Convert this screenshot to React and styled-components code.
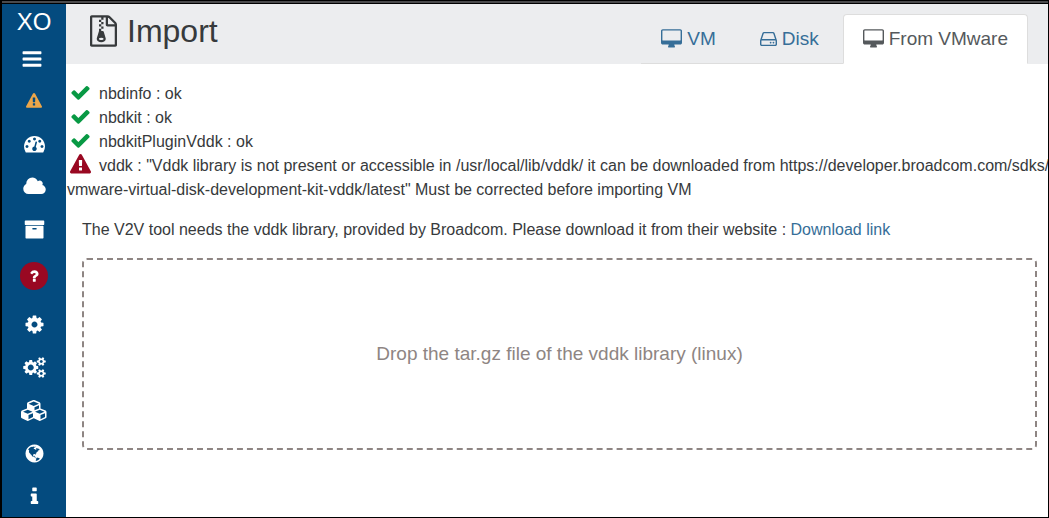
import React from 'react';
import styled, { createGlobalStyle } from 'styled-components';

const color = {
  brand: '#044b7f',
  link: '#366e98',
  text: '#373a3c',
  tabText: '#55595c',
  header: '#ecedef',
  line: '#dddddd',
  success: '#089944',
  danger: '#990822',
  warning: '#eca649',
  muted: '#8e8583',
};

const GlobalStyle = createGlobalStyle`
  *, *::before, *::after { box-sizing: border-box; }
  body {
    margin: 0;
    background: #000;
    color: ${color.text};
    font-family: "Liberation Sans", Arial, sans-serif;
    font-size: 16px;
    line-height: 24px;
  }
`;

const COGS_SMALL =
  'v140q0 16-149 31-12 27-30 52 51 113 51 138 0 4-4 7-122 71-124 71-8 0-46-47t-52-68q-20 2-30 2t-30-2q-14 21-52 68t-46 47q-2 0-124-71-4-3-4-7 0-25 51-138-18-25-30-52-149-15-149-31v-140q0-16 149-31 13-29 30-52-51-113-51-138 0-4 4-7 4-2 35-20t59-34 30-16q8 0 46 46.5t52 67.5q20-2 30-2t30 2q51-71 92-112l6-2q4 0 124 70 4 3 4 7 0 25-51 138 17 23 30 52 149 15 149 31z';

/* Each glyph: [left edge, width, path] on a grid 1792 units high. */
const glyphs = {
  check: [0, 1792, 'M1671 566q0 40-28 68l-724 724-136 136q-28 28-68 28t-68-28l-136-136-362-362q-28-28-28-68t28-68l136-136q28-28 68-28t68 28l294 295 656-657q28-28 68-28t68 28l136 136q28 28 28 68z'],
  bars: [0, 1792, 'M1664 1344v128q0 26-19 45t-45 19h-1408q-26 0-45-19t-19-45v-128q0-26 19-45t45-19h1408q26 0 45 19t19 45zm0-512v128q0 26-19 45t-45 19h-1408q-26 0-45-19t-19-45v-128q0-26 19-45t45-19h1408q26 0 45 19t19 45zm0-512v128q0 26-19 45t-45 19h-1408q-26 0-45-19t-19-45v-128q0-26 19-45t45-19h1408q26 0 45 19t19 45z'],
  warning: [0, 1792, 'M1024 1375v-190q0-14-9.5-23.5t-22.5-9.5h-192q-13 0-22.5 9.5t-9.5 23.5v190q0 14 9.5 23.5t22.5 9.5h192q13 0 22.5-9.5t9.5-23.5zm-2-374l18-459q0-12-10-19-13-11-24-11h-220q-11 0-24 11-10 7-10 21l17 457q0 10 10 16.5t24 6.5h185q14 0 23.5-6.5t10.5-16.5zm-14-934l768 1408q35 63-2 126-17 29-46.5 46t-63.5 17h-1536q-34 0-63.5-17t-46.5-46q-37-63-2-126l768-1408q17-31 47-49t65-18 65 18 47 49z'],
  dashboard: [0, 1792, 'M384 1152q0-53-37.5-90.5t-90.5-37.5-90.5 37.5-37.5 90.5 37.5 90.5 90.5 37.5 90.5-37.5 37.5-90.5zm192-448q0-53-37.5-90.5t-90.5-37.5-90.5 37.5-37.5 90.5 37.5 90.5 90.5 37.5 90.5-37.5 37.5-90.5zm428 481l101-382q6-26-7.5-48.5t-38.5-29.5-48 6.5-30 39.5l-101 382q-60 5-107 43.5t-63 98.5q-20 77 20 146t117 89 146-20 89-117q16-60-6-117t-72-91zm660-33q0-53-37.5-90.5t-90.5-37.5-90.5 37.5-37.5 90.5 37.5 90.5 90.5 37.5 90.5-37.5 37.5-90.5zm-640-640q0-53-37.5-90.5t-90.5-37.5-90.5 37.5-37.5 90.5 37.5 90.5 90.5 37.5 90.5-37.5 37.5-90.5zm448 192q0-53-37.5-90.5t-90.5-37.5-90.5 37.5-37.5 90.5 37.5 90.5 90.5 37.5 90.5-37.5 37.5-90.5zm320 448q0 261-141 483-19 29-54 29h-1402q-35 0-54-29-141-221-141-483 0-182 71-348t191-286 286-191 348-71 348 71 286 191 191 286 71 348z'],
  cloud: [64, 1920, 'M1984 1152q0 159-112.5 271.5t-271.5 112.5h-1088q-185 0-316.5-131.5t-131.5-316.5q0-132 71-241.5t187-163.5q-2-28-2-43 0-212 150-362t362-150q158 0 286.5 88t187.5 230q70-62 166-62 106 0 181 75t75 181q0 75-41 138 129 30 213 134.5t84 239.5z'],
  archive: [0, 1792, 'M1088 832q0-26-19-45t-45-19h-256q-26 0-45 19t-19 45 19 45 45 19h256q26 0 45-19t19-45zm576-192v960q0 26-19 45t-45 19h-1408q-26 0-45-19t-19-45v-960q0-26 19-45t45-19h1408q26 0 45 19t19 45zm64-448v256q0 26-19 45t-45 19h-1536q-26 0-45-19t-19-45v-256q0-26 19-45t45-19h1536q26 0 45 19t19 45z'],
  question: [0, 1792, 'M1088 1256v240q0 16-12 28t-28 12h-240q-16 0-28-12t-12-28v-240q0-16 12-28t28-12h240q16 0 28 12t12 28zm316-600q0 54-15.5 101t-35 76.5-55 59.5-57.5 43.5-61 35.5q-41 23-68.5 65t-27.5 67q0 17-12 32.5t-28 15.5h-240q-15 0-25.5-18.5t-10.5-37.5v-45q0-83 65-156.5t143-108.5q59-27 84-56t25-76q0-42-46.5-74t-107.5-32q-65 0-108 29-35 25-107 115-13 16-31 16-12 0-25-8l-164-125q-13-10-15.5-25t5.5-28q160-266 464-266 80 0 161 31t146 83 106 127.5 41 158.5z'],
  cog: [0, 1792, 'M1152 896q0-106-75-181t-181-75-181 75-75 181 75 181 181 75 181-75 75-181zm512-109v222q0 12-8 23t-20 13l-185 28q-19 54-39 91 35 50 107 138 10 12 10 25t-9 23q-27 37-99 108t-94 71q-12 0-26-9l-138-108q-44 23-91 38-16 136-29 186-7 28-36 28h-222q-14 0-24.5-8.5t-11.5-21.5l-28-184q-49-16-90-37l-141 107q-10 9-25 9-14 0-25-11-126-114-165-168-7-10-7-23 0-12 8-23 15-21 51-66.5t54-70.5q-27-50-41-99l-183-27q-13-2-21-12.5t-8-23.5v-222q0-12 8-23t19-13l186-28q14-46 39-92-40-57-107-138-10-12-10-24 0-10 9-23 26-36 98.5-107.5t94.5-71.5q13 0 26 10l138 107q44-23 91-38 16-136 29-186 7-28 36-28h222q14 0 24.5 8.5t11.5 21.5l28 184q49 16 90 37l142-107q9-9 24-9 13 0 25 10 129 119 165 170 7 8 7 22 0 12-8 23-15 21-51 66.5t-54 70.5q26 50 41 98l183 28q13 2 21 12.5t8 23.5z'],
  cogs: [0, 1920, 'M896 896q0-106-75-181t-181-75-181 75-75 181 75 181 181 75 181-75 75-181zm768 512q0-52-38-90t-90-38-90 38-38 90q0 53 37.5 90.5t90.5 37.5 90.5-37.5 37.5-90.5zm0-1024q0-52-38-90t-90-38-90 38-38 90q0 53 37.5 90.5t90.5 37.5 90.5-37.5 37.5-90.5zm-384 421v185q0 10-7 19.5t-16 10.5l-155 24q-11 35-32 76 34 48 90 115 7 11 7 20 0 12-7 19-23 30-82.5 89.5t-78.5 59.5q-11 0-21-7l-115-90q-37 19-77 31-11 108-23 155-7 24-30 24h-186q-11 0-20-7.5t-10-17.5l-23-153q-34-10-75-31l-118 89q-7 7-20 7-11 0-21-8-144-133-144-160 0-9 7-19 10-14 41-53t47-61q-23-44-35-82l-152-24q-10-1-17-9.5t-7-19.5v-185q0-10 7-19.5t16-10.5l155-24q11-35 32-76-34-48-90-115-7-11-7-20 0-12 7-20 22-30 82-89t79-59q11 0 21 7l115 90q34-18 77-32 11-108 23-154 7-24 30-24h186q11 0 20 7.5t10 17.5l23 153q34 10 75 31l118-89q8-7 20-7 11 0 21 8 144 133 144 160 0 8-7 19-12 16-42 54t-45 60q23 48 34 82l152 23q10 2 17 10.5t7 19.5zM1920 1338' + COGS_SMALL + 'M1920 314' + COGS_SMALL],
  cubes: [0, 2304, 'M640 1632l384-192v-314l-384 164v342zm-64-454l404-173-404-173-404 173zm1088 454l384-192v-314l-384 164v342zm-64-454l404-173-404-173-404 173zm-448-293l384-165v-266l-384 164v267zm-64-379l441-189-441-189-441 189zm1088 518v416q0 36-19 67t-52 47l-448 224q-25 14-57 14t-57-14l-448-224q-4-2-7-4-2 2-7 4l-448 224q-25 14-57 14t-57-14l-448-224q-33-16-52-47t-19-67v-416q0-38 21.5-70t56.5-48l434-186v-400q0-38 21.5-70t56.5-48l448-192q23-10 50-10t50 10l448 192q35 16 56.5 48t21.5 70v400l434 186q36 16 57 48t21 70z'],
  globe: [0, 1792, 'M896 128q209 0 385.5 103t279.5 279.5 103 385.5-103 385.5-279.5 279.5-385.5 103-385.5-103-279.5-279.5-103-385.5 103-385.5 279.5-279.5 385.5-103zm274 521q-2 1-9.5 9.5t-13.5 9.5q2 0 4.5-5t5-11 3.5-7q6-7 22-15 14-6 52-12 34-8 51 11-2-2 9.5-13t14.5-12q3-2 15-4.5t15-7.5l2-22q-12 1-17.5-7t-6.5-21q0 2-6 8 0-7-4.5-8t-11.5 1-9 1q-10-3-15-7.5t-8-16.5-4-15q-2-5-9.5-11t-9.5-10q-1-2-2.5-5.5t-3-6.5-4-5.5-5.5-2.5-7 5-7.5 10-4.5 5q-3-2-6-1.5t-4.5 1-4.5 3-5 3.5q-3 2-8.5 3t-8.5 2q15-5-1-11-10-4-16-3 9-4 7.5-12t-8.5-14h5q-1-4-8.5-8.5t-17.5-8.5-13-6q-8-5-34-9.5t-33-.5q-5 6-4.5 10.5t4 14 3.5 12.5q1 6-5.5 13t-6.5 12q0 7 14 15.5t10 21.5q-3 8-16 16t-16 12q-5 8-1.5 18.5t10.5 16.5q2 2 1.5 4t-3.5 4.5-5.5 4-6.5 3.5l-3 2q-11 5-20.5-6t-13.5-26q-7-25-16-30-23-8-29 1-5-13-41-26-25-9-58-4 6-1 0-15-7-15-19-12 3-6 4-17.5t1-13.5q3-13 12-23 1-1 7-8.5t9.5-13.5.5-6q35 4 50-11 5-5 11.5-17t10.5-17q9-6 14-5.5t14.5 5.5 14.5 5q14 1 15.5-11t-7.5-20q12 1 3-17-4-7-8-9-12-4-27 5-8 4 2 8-1-1-9.5 10.5t-16.5 17.5-16-5q-1-1-5.5-13.5t-9.5-13.5q-8 0-16 15 3-8-11-15t-24-8q19-12-8-27-7-4-20.5-5t-19.5 4q-5 7-5.5 11.5t5 8 10.5 5.5 11.5 4 8.5 3q14 10 8 14-2 1-8.5 3.5t-11.5 4.5-6 4q-3 4 0 14t-2 14q-5-5-9-17.5t-7-16.5q7 9-25 6l-10-1q-4 0-16 2t-20.5 1-13.5-8q-4-8 0-20 1-4 4-2-4-3-11-9.5t-10-8.5q-46 15-94 41 6 1 12-1 5-2 13-6.5t10-5.5q34-14 42-7l5-5q14 16 20 25-7-4-30-1-20 6-22 12 7 12 5 18-4-3-11.5-10t-14.5-11-15-5q-16 0-22 1-146 80-235 222 7 7 12 8 4 1 5 9t2.5 11 11.5-3q9 8 3 19 1-1 44 27 19 17 21 21 3 11-10 18-1-2-9-9t-9-4q-3 5 .5 18.5t10.5 12.5q-7 0-9.5 16t-2.5 35.5-1 23.5l2 1q-3 12 5.5 34.5t21.5 19.5q-13 3 20 43 6 8 8 9 3 2 12 7.5t15 10 10 10.5q4 5 10 22.5t14 23.5q-2 6 9.5 20t10.5 23q-1 0-2.5 1t-2.5 1q3 7 15.5 14t15.5 13q1 3 2 10t3 11 8 2q2-20-24-62-15-25-17-29-3-5-5.5-15.5t-4.5-14.5q2 0 6 1.5t8.5 3.5 7.5 4 2 3q-3 7 2 17.5t12 18.5 17 19 12 13q6 6 14 19.5t0 13.5q9 0 20 10.5t17 19.5q5 8 8 26t5 24q2 7 8.5 13.5t12.5 9.5l16 8 13 7q5 2 18.5 10.5t21.5 11.5q10 4 16 4t14.5-2.5 13.5-3.5q15-2 29 15t21 21q36 19 55 11-2 1 .5 7.5t8 15.5 9 14.5 5.5 8.5q5 6 18 15t18 15q6-4 7-9-3 8 7 20t18 10q14-3 14-32-31 15-49-18 0-1-2.5-5.5t-4-8.5-2.5-8.5 0-7.5 5-3q9 0 10-3.5t-2-12.5-4-13q-1-8-11-20t-12-15q-5 9-16 8t-16-9q0 1-1.5 5.5t-1.5 6.5q-13 0-15-1 1-3 2.5-17.5t3.5-22.5q1-4 5.5-12t7.5-14.5 4-12.5-4.5-9.5-17.5-2.5q-19 1-26 20-1 3-3 10.5t-5 11.5-9 7q-7 3-24 2t-24-5q-13-8-22.5-29t-9.5-37q0-10 2.5-26.5t3-25-5.5-24.5q3-2 9-9.5t10-10.5q2-1 4.5-1.5t4.5 0 4-1.5 3-6q-1-1-4-3-3-3-4-3 7 3 28.5-1.5t27.5 1.5q15 11 22-2 0-1-2.5-9.5t-.5-13.5q5 27 29 9 3 3 15.5 5t17.5 5q3 2 7 5.5t5.5 4.5 5-.5 8.5-6.5q10 14 12 24 11 40 19 44 7 3 11 2t4.5-9.5 0-14-1.5-12.5l-1-8v-18l-1-8q-15-3-18.5-12t1.5-18.5 15-18.5q1-1 8-3.5t15.5-6.5 12.5-8q21-19 15-35 7 0 11-9-1 0-5-3t-7.5-5-4.5-2q9-5 2-16 5-3 7.5-11t7.5-10q9 12 21 2 8-8 1-16 5-7 20.5-10.5t18.5-9.5q7 2 8-2t1-12 3-12q4-5 15-9t13-5l17-11q3-4 0-4 18 2 31-11 10-11-6-20 3-6-3-9.5t-15-5.5q3-1 11.5-.5t10.5-1.5q15-10-7-16-17-5-43 12zm-163 877q206-36 351-189-3-3-12.5-4.5t-12.5-3.5q-18-7-24-8 1-7-2.5-13t-8-9-12.5-8-11-7q-2-2-7-6t-7-5.5-7.5-4.5-8.5-2-10 1l-3 1q-3 1-5.5 2.5t-5.5 3-4 3 0 2.5q-21-17-36-22-5-1-11-5.5t-10.5-7-10-1.5-11.5 7q-5 5-6 15t-2 13q-7-5 0-17.5t2-18.5q-3-6-10.5-4.5t-12 4.5-11.5 8.5-9 6.5-8.5 5.5-8.5 7.5q-3 4-6 12t-5 11q-2-4-11.5-6.5t-9.5-5.5q2 10 4 35t5 38q7 31-12 48-27 25-29 40-4 22 12 26 0 7-8 20.5t-7 21.5q0 6 2 16z'],
  info: [0, 1792, 'M1216 1344v128q0 26-19 45t-45 19h-512q-26 0-45-19t-19-45v-128q0-26 19-45t45-19h64v-384h-64q-26 0-45-19t-19-45v-128q0-26 19-45t45-19h384q26 0 45 19t19 45v576h64q26 0 45 19t19 45zm-128-1152v192q0 26-19 45t-45 19h-256q-26 0-45-19t-19-45v-192q0-26 19-45t45-19h256q26 0 45 19t19 45z'],
  desktop: [0, 1920, 'M1792 992v-832q0-13-9.5-22.5t-22.5-9.5h-1600q-13 0-22.5 9.5t-9.5 22.5v832q0 13 9.5 22.5t22.5 9.5h1600q13 0 22.5-9.5t9.5-22.5zm128-832v1088q0 66-47 113t-113 47h-544q0 37 16 77.5t32 71 16 43.5q0 26-19 45t-45 19h-512q-26 0-45-19t-19-45q0-14 16-44t32-70 16-78h-544q-66 0-113-47t-47-113v-1088q0-66 47-113t113-47h1600q66 0 113 47t47 113z'],
  disk: [128, 1536, 'M1168 1216q0 33-23.5 56.5t-56.5 23.5-56.5-23.5-23.5-56.5 23.5-56.5 56.5-23.5 56.5 23.5 23.5 56.5zm256 0q0 33-23.5 56.5t-56.5 23.5-56.5-23.5-23.5-56.5 23.5-56.5 56.5-23.5 56.5 23.5 23.5 56.5zm112 160v-320q0-13-9.5-22.5t-22.5-9.5h-1216q-13 0-22.5 9.5t-9.5 22.5v320q0 13 9.5 22.5t22.5 9.5h1216q13 0 22.5-9.5t9.5-22.5zm-1230-480h1180l-157-482q-4-13-16-21.5t-26-8.5h-782q-14 0-26 8.5t-16 21.5zm1358 160v320q0 66-47 113t-113 47h-1216q-66 0-113-47t-47-113v-320q0-25 16-75l197-606q17-53 63-86t101-33h782q55 0 101 33t63 86l197 606q16 50 16 75z'],
  fileArchive: [128, 1536, 'M768 384v-128h-128v128h128zm128 128v-128h-128v128h128zm-128 128v-128h-128v128h128zm128 128v-128h-128v128h128zm700-388q28 28 48 76t20 88v1152q0 40-28 68t-68 28h-1344q-40 0-68-28t-28-68v-1600q0-40 28-68t68-28h896q40 0 88 20t76 48zm-444-244v376h376q-10-29-22-41l-313-313q-12-12-41-22zm384 1528v-1024h-416q-40 0-68-28t-28-68v-416h-128v128h-128v-128h-512v1536h1280zm-627-721l107 349q8 27 8 52 0 83-72.5 137.5t-183.5 54.5-183.5-54.5-72.5-137.5q0-25 8-52 21-63 120-396v-128h128v128h79q22 0 39 13t23 34zm-141 465q53 0 90.5-19t37.5-45-37.5-45-90.5-19-90.5 19-37.5 45 37.5 45 90.5 19z'],
};

const Svg = styled.svg`
  display: block;
  flex: none;
  fill: currentColor;
`;

function Icon({ name, size }) {
  const [left, width, d] = glyphs[name];
  return (
    <Svg
      viewBox={`${left} 0 ${width} 1792`}
      width={Math.round((size * width) / 1792)}
      height={size}
      aria-hidden="true"
    >
      <path d={d} />
    </Svg>
  );
}

const Frame = styled.div`
  min-height: 100vh;
  display: flex;
  flex-direction: column;
  border: solid #000;
  border-width: 0 1px 1px 2px;
`;

const TopEdge = styled.div`
  height: 4px;
  background: #4a4a4c;
  border: solid #000;
  border-width: 1px 0;
`;

const Page = styled.div`
  flex: 1;
  display: flex;
  background: #fff;
`;

const Sidebar = styled.nav`
  flex: none;
  width: 64px;
  background: ${color.brand};
  color: #fff;
`;

const Brand = styled.a`
  display: block;
  color: inherit;
  font-size: 24px;
  line-height: 36px;
  text-align: center;
  text-decoration: none;
`;

const MenuToggle = styled.button`
  display: flex;
  align-items: center;
  justify-content: center;
  width: 100%;
  height: 38px;
  padding: 0 5px 0 0;
  border: 0;
  background: none;
  color: inherit;
  cursor: pointer;
`;

const MenuList = styled.ul`
  margin: 0;
  padding: 0;
  list-style: none;
`;

const MenuLink = styled.a`
  display: flex;
  align-items: center;
  justify-content: center;
  height: ${({ $tall }) => ($tall ? '52px' : '43px')};
  padding: ${({ $tall }) => ($tall ? '0' : '2px 0 0')};
  color: ${({ $color }) => $color || 'inherit'};
`;

const Badge = styled.span`
  display: flex;
  align-items: center;
  justify-content: center;
  width: 28px;
  height: 28px;
  border-radius: 50%;
  background: ${color.danger};
`;

const Main = styled.main`
  flex: 1;
  min-width: 0;
  overflow: hidden;
`;

const Header = styled.header`
  display: flex;
  justify-content: space-between;
  padding: 0 20px 0 24px;
  background: ${color.header};
`;

const Title = styled.h1`
  display: flex;
  align-items: center;
  align-self: flex-start;
  gap: 10px;
  margin: 9px 0 0;
  font-size: 32px;
  font-weight: 400;
  line-height: 36px;
`;

const Tabs = styled.nav`
  display: flex;
  gap: 4px;
  margin-top: 10px;
  border-bottom: 1px solid ${color.line};
`;

const Tab = styled.a`
  display: flex;
  align-items: center;
  gap: 5px;
  height: 50px;
  margin-bottom: -1px;
  padding: 0 19px;
  border: 1px solid transparent;
  border-radius: 4px 4px 0 0;
  color: ${color.link};
  font-size: 19px;
  text-decoration: none;
  white-space: nowrap;

  &[aria-current='page'] {
    border-color: ${color.line} ${color.line} #fff;
    background: #fff;
    color: ${color.tabText};
  }
`;

const Checks = styled.ul`
  margin: 0 -4px 0 0;
  padding: 18px 0 0 1px;
  list-style: none;
`;

const Check = styled.li`
  min-height: 24px;
`;

const CheckIcon = styled.span`
  display: inline-flex;
  justify-content: center;
  width: 27px;
  margin-right: 5px;
  vertical-align: -4px;
  color: ${({ $ok }) => ($ok ? color.success : color.danger)};
`;

const Setup = styled.section`
  padding: 16px 11px 16px 16px;
`;

const Hint = styled.p`
  margin: 0 0 16px;
`;

const Link = styled.a`
  color: ${color.link};
  text-decoration: none;
`;

const DropZone = styled.button`
  display: block;
  width: 100%;
  height: 192px;
  border: 2px dashed ${color.muted};
  border-radius: 5px;
  background: none;
  color: ${color.muted};
  font-family: inherit;
  font-size: 19px;
  cursor: pointer;
`;

const menu = [
  { name: 'warning', label: 'Alerts', size: 16, color: color.warning },
  { name: 'dashboard', label: 'Dashboard' },
  { name: 'cloud', label: 'Self service' },
  { name: 'archive', label: 'Backup' },
  { name: 'question', label: 'Support', size: 16, badge: true },
  { name: 'cog', label: 'Settings' },
  { name: 'cogs', label: 'Jobs' },
  { name: 'cubes', label: 'Hub' },
  { name: 'globe', label: 'Proxies' },
  { name: 'info', label: 'About' },
];

const tabs = [
  { icon: 'desktop', label: 'VM' },
  { icon: 'disk', label: 'Disk' },
  { icon: 'desktop', label: 'From VMware', active: true },
];

const VDDK_ERROR =
  'vddk : "Vddk library is not present or accessible in /usr/local/lib/vddk/ it can be downloaded from https://developer.broadcom.com/sdks/\u200bvmware-virtual-disk-development-kit-vddk/latest" Must be corrected before importing VM';

const checks = [
  { ok: true, text: 'nbdinfo : ok' },
  { ok: true, text: 'nbdkit : ok' },
  { ok: true, text: 'nbdkitPluginVddk : ok' },
  { ok: false, text: VDDK_ERROR },
];

export default function App() {
  return (
    <Frame>
      <GlobalStyle />
      <TopEdge />
      <Page>
        <Sidebar aria-label="Main menu">
          <Brand href="#home">XO</Brand>
          <MenuToggle type="button" aria-label="Toggle menu">
            <Icon name="bars" size={22} />
          </MenuToggle>
          <MenuList>
            {menu.map((item) => {
              const icon = <Icon name={item.name} size={item.size || 21} />;
              return (
                <li key={item.name}>
                  <MenuLink
                    href={`#${item.name}`}
                    aria-label={item.label}
                    $tall={item.badge}
                    $color={item.color}
                  >
                    {item.badge ? <Badge>{icon}</Badge> : icon}
                  </MenuLink>
                </li>
              );
            })}
          </MenuList>
        </Sidebar>
        <Main>
          <Header>
            <Title>
              <Icon name="fileArchive" size={32} />
              Import
            </Title>
            <Tabs aria-label="Import source">
              {tabs.map((tab) => (
                <Tab
                  key={tab.label}
                  href="#import"
                  aria-current={tab.active ? 'page' : undefined}
                >
                  <Icon name={tab.icon} size={20} />
                  {tab.label}
                </Tab>
              ))}
            </Tabs>
          </Header>
          <Checks>
            {checks.map((check) => (
              <Check key={check.text}>
                <CheckIcon $ok={check.ok}>
                  <Icon name={check.ok ? 'check' : 'warning'} size={21} />
                </CheckIcon>
                {check.text}
              </Check>
            ))}
          </Checks>
          <Setup>
            <Hint>
              The V2V tool needs the vddk library, provided by Broadcom. Please
              download it from their website :{' '}
              <Link href="#download">Download link</Link>
            </Hint>
            <DropZone type="button">
              Drop the tar.gz file of the vddk library (linux)
            </DropZone>
          </Setup>
        </Main>
      </Page>
    </Frame>
  );
}
